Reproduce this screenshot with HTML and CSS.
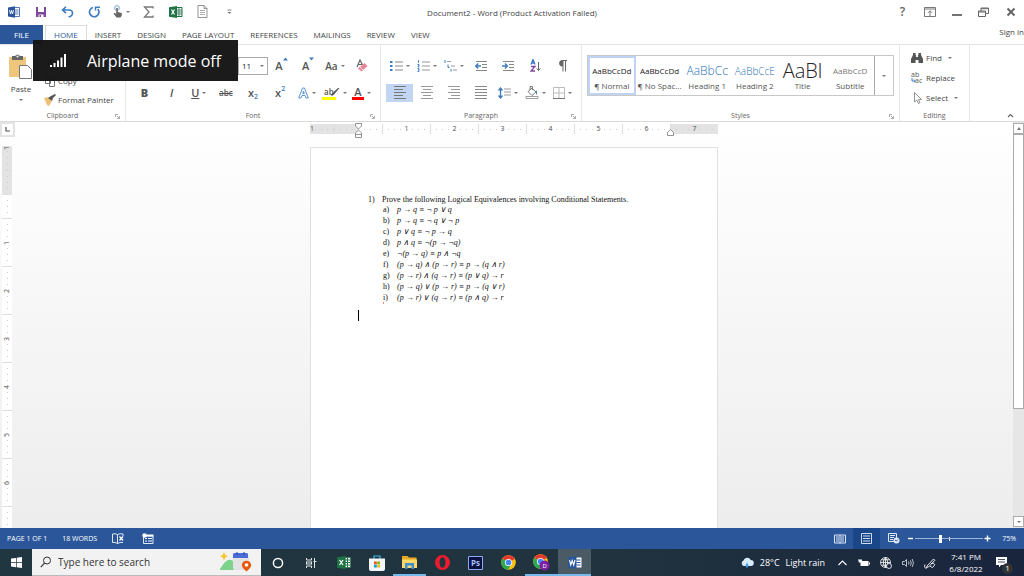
FILE: index.html
```html
<!DOCTYPE html>
<html lang="en">
<head>
    <meta charset="UTF-8">
    <meta name="viewport" content="width=device-width, initial-scale=1.0">
    <title>Document2 - Word</title>
    <link rel="stylesheet" href="styles.css">
</head>
<body>
    <!-- Title bar -->
    <header class="titlebar">
        <div class="quick">
            <button aria-label="Word"><svg width="12" height="12" viewBox="0 0 12 12"><path d="M6 1.500h5.500v9H6z" fill="#fff" stroke="#2b579a" stroke-width=".8"/><path d="M7 4h3.500M7 6h3.500M7 8h3.500" stroke="#2b579a" stroke-width=".8"/><path d="M0 1.500 7 .3v11.400L0 10.500z" fill="#2b579a"/><path d="M1.500 4l1 4L3.500 4.500 4.500 8l1-4" fill="none" stroke="#fff" stroke-width=".9"/></svg></button>
            <button aria-label="Save"><svg width="12" height="12" viewBox="0 0 12 12"><path d="M1 1h10v10H1z" fill="#80489c"/><path d="M3 1h6v5H3zM3.500 8.500h5V11h-5z" fill="#fff"/><path d="M4.500 9h1.500v2H4.500z" fill="#80489c"/></svg></button>
            <button aria-label="Undo"><svg width="13" height="12" viewBox="0 0 13 12"><path d="M5 .8 1.500 4 5 7.200M1.800 4H8c5 0 4.500 6.500-.5 6.800" fill="none" stroke="#3e7cc0" stroke-width="1.600"/></svg></button>
            <button aria-label="Repeat"><svg width="13" height="12" viewBox="0 0 13 12"><path d="M5 1.500A4.700 4.700 0 1 0 9.800 3" fill="none" stroke="#3e7cc0" stroke-width="1.700"/><path d="M7.500 4.500V1.200H12" fill="none" stroke="#3e7cc0" stroke-width="1.500"/></svg></button>
            <button aria-label="Touch mode"><svg width="10" height="13" viewBox="0 0 10 13"><circle cx="4" cy="3" r="2.400" fill="none" stroke="#7ba7d6"/><path d="M3.200 3h1.600v4l4 1v2.500L7.500 12.500h-4L.5 8.500l1-.7 1.700 1.200z" fill="#666"/></svg><i class="caret"></i></button>
            <button aria-label="Sum"><svg width="11" height="12" viewBox="0 0 11 12"><path d="M10 2.500V1H1.500L6 6l-4.500 5H10V9.500" fill="none" stroke="#777" stroke-width="1.300"/></svg></button>
            <button aria-label="Excel"><svg width="14" height="12" viewBox="0 0 14 12"><path d="M7 1.500h6v9H7z" fill="#fff" stroke="#217346"/><path d="M7 4h6M7 6h6M7 8h6M10 1.500v9" stroke="#217346" stroke-width=".8"/><path d="M0 1.200 8 0v12L0 10.800z" fill="#217346"/><path d="M2.500 3.500l3 5M5.500 3.500l-3 5" stroke="#fff" stroke-width="1.200"/></svg></button>
            <button aria-label="New document"><svg width="11" height="13" viewBox="0 0 11 13"><path d="M1 .5h6L10 3.500v9H1zM7 .5v3h3" fill="#fff" stroke="#888" stroke-width=".9"/><path d="M3 5.500h5M3 7.500h5M3 9.500h5" stroke="#999" stroke-width=".8"/></svg></button>
            <button aria-label="Customize"><svg width="5" height="6" viewBox="0 0 5 6"><path d="M.5 1h4" stroke="#777" stroke-width=".9"/><path d="M.5 3h4L2.500 5z" fill="#777"/></svg></button>
        </div>
        <h1 class="doc-title">Document2 - Word (Product Activation Failed)</h1>
        <div class="window-buttons">
            <button class="help" aria-label="Help">?</button>
            <button aria-label="Ribbon display"><svg width="12" height="10" viewBox="0 0 12 10"><path d="M.5.500h11v9H.5zM.5 2h11M6 9V4M4 5.800 6 3.800l2 2" fill="none" stroke="#777"/></svg></button>
            <button aria-label="Minimize"><svg width="10" height="10" viewBox="0 0 10 10"><path d="M0 8h10" stroke="#666" stroke-width="1.800"/></svg></button>
            <button aria-label="Restore"><svg width="11" height="10" viewBox="0 0 11 10"><path d="M.5 4h7v5.500h-7zM3 4V1h7.500v5.500h-3M.5 5h7M3 1.700h7.500" fill="none" stroke="#666"/></svg></button>
            <button aria-label="Close"><svg width="10" height="10" viewBox="0 0 10 10"><path d="M1.500 1.500l7 7M8.500 1.500l-7 7" stroke="#666" stroke-width="2"/></svg></button>
        </div>
    </header>

    <!-- Tabs -->
    <nav class="tabs">
        <button class="tab file">FILE</button>
        <button class="tab active">HOME</button>
        <button class="tab">INSERT</button>
        <button class="tab">DESIGN</button>
        <button class="tab">PAGE LAYOUT</button>
        <button class="tab">REFERENCES</button>
        <button class="tab">MAILINGS</button>
        <button class="tab">REVIEW</button>
        <button class="tab">VIEW</button>
        <a class="sign-in" href="#">Sign in</a>
    </nav>

    <!-- Ribbon -->
    <section class="ribbon">
        <div class="group clipboard">
            <div class="group-body">
                <button class="paste">
                    <svg width="26" height="25" viewBox="0 0 26 25"><path d="M1 3h17v20H1z" fill="#eec77d"/><path d="M4 2h3q2.500-3 5 0h3v4H4z" fill="#666"/><circle cx="9.500" cy="2.500" r="1" fill="#fff"/><path d="M11.500 11.500h8l4 4v9h-12z" fill="#fff" stroke="#777"/></svg>
                    <span>Paste</span>
                    <i class="caret"></i>
                </button>
                <div class="stack">
                    <button><svg width="12" height="12" viewBox="0 0 12 12"><path d="M2 1l7 8M10 1 3 9" stroke="#666"/></svg>Cut</button>
                    <button><svg width="12" height="12" viewBox="0 0 12 12"><path d="M1.500 1.500h5v7h-5zM5.500 4.500h5v7h-5z" fill="#fff" stroke="#777"/></svg>Copy</button>
                    <button><svg width="12" height="12" viewBox="0 0 12 12"><path d="M0 4l4-1 4 4-3 5-2-1z" fill="#eec077"/><path d="M4 4l3-2 4-2 1 1-3 3-1 3z" fill="#555"/></svg>Format Painter</button>
                </div>
            </div>
            <div class="group-label">Clipboard<svg class="launcher" width="5" height="5" viewBox="0 0 5 5"><path d="M.5 3V.5H3M2 2l2 2M4.500 2v2.500H2" fill="none" stroke="#888" stroke-width=".7"/></svg></div>
        </div>

        <div class="group font">
            <div class="group-body">
                <div class="tool-row">
                    <select class="font-name" aria-label="Font"><option>Calibri (Body)</option></select>
                    <div class="size-box"><select class="font-size" aria-label="Font size"><option>11</option></select><i class="caret"></i></div>
                    <button class="tool glyph" aria-label="Grow font">A<svg class="mark" width="5" height="4" viewBox="0 0 5 4"><path d="M0 3.500h5L2.500.5z" fill="#3e7cc0"/></svg></button>
                    <button class="tool glyph" aria-label="Shrink font">A<svg class="mark" width="5" height="4" viewBox="0 0 5 4"><path d="M0 .5h5L2.500 3.500z" fill="#3e7cc0"/></svg></button>
                    <button class="tool glyph case" aria-label="Change case">Aa<i class="caret"></i></button>
                    <button class="tool" aria-label="Clear formatting"><svg width="12" height="13" viewBox="0 0 12 13"><path d="M1 8 4 1l2.500 5M2 5.500h4" fill="none" stroke="#666" stroke-width="1.200"/><path d="M2 9.500 8.500 4 11.500 7 5.500 12.500z" fill="#e9849a"/><path d="M4 8l3 3" stroke="#fff" stroke-width=".7"/></svg></button>
                </div>
                <div class="tool-row">
                    <button class="tool glyph"><b>B</b></button>
                    <button class="tool glyph"><em>I</em></button>
                    <button class="tool glyph"><u>U</u><i class="caret"></i></button>
                    <button class="tool glyph small"><s>abc</s></button>
                    <button class="tool glyph" aria-label="Subscript">x<sub>2</sub></button>
                    <button class="tool glyph" aria-label="Superscript">x<sup>2</sup></button>
                    <button class="tool" aria-label="Text effects"><svg width="11" height="12" viewBox="0 0 11 12"><path d="M.7 11 4.500 1h2l3.800 10H8L7 8.500H4L3 11zM4.700 6.500h1.600L5.500 4z" fill="#fff" stroke="#5b94cf" stroke-width="1"/></svg><i class="caret"></i></button>
                    <button class="tool glyph small"><span class="swatch yellow">ab</span><svg class="pen" width="9" height="9" viewBox="0 0 9 9"><path d="M8.500 0 3 6.500 0 8.500 1.500 5 7 0z" fill="#555"/></svg><i class="caret"></i></button>
                    <button class="tool glyph"><span class="swatch red">A</span><i class="caret"></i></button>
                </div>
            </div>
            <div class="group-label">Font<svg class="launcher" width="5" height="5" viewBox="0 0 5 5"><path d="M.5 3V.5H3M2 2l2 2M4.500 2v2.500H2" fill="none" stroke="#888" stroke-width=".7"/></svg></div>
        </div>

        <div class="group paragraph">
            <div class="group-body">
                <div class="tool-row">
                    <button class="tool" aria-label="Bullets"><svg width="13" height="12" viewBox="0 0 13 12"><path d="M0 1h2.500v2H0zM0 5h2.500v2H0zM0 9h2.500v2H0z" fill="#3e7cc0"/><path d="M5 2h8M5 6h8M5 10h8" stroke="#888"/></svg><i class="caret"></i></button>
                    <button class="tool" aria-label="Numbering"><svg width="13" height="12" viewBox="0 0 13 12"><path d="M1.500 0v3M.5 4.500h1.500v1.500h-1V7H2.500M.5 8.500H2v3H.5M1 10h1" fill="none" stroke="#3e7cc0" stroke-width=".9"/><path d="M5 2h8M5 6h8M5 10h8" stroke="#999"/></svg><i class="caret"></i></button>
                    <button class="tool" aria-label="Multilevel list"><svg width="13" height="12" viewBox="0 0 13 12"><path d="M1 0v3M4 4.500v3H5.500M7 9v2.500" fill="none" stroke="#3e7cc0"/><path d="M3 1.500h4M7 6h4M9 10h4" stroke="#999"/></svg><i class="caret"></i></button>
                    <button class="tool" aria-label="Decrease indent"><svg width="12" height="12" viewBox="0 0 12 12"><path d="M1 1.500h11M7 4.500h5M7 7.500h5M1 10.500h11" stroke="#888"/><path d="M6 6H1M3.200 3.500.8 6l2.400 2.500" fill="none" stroke="#3e7cc0" stroke-width="1.400"/></svg></button>
                    <button class="tool" aria-label="Increase indent"><svg width="12" height="12" viewBox="0 0 12 12"><path d="M1 1.500h11M7 4.500h5M7 7.500h5M1 10.500h11" stroke="#888"/><path d="M0 6h5M3 3.500 5.400 6 3 8.500" fill="none" stroke="#3e7cc0" stroke-width="1.400"/></svg></button>
                    <button class="tool" aria-label="Sort"><svg width="11" height="13" viewBox="0 0 11 13"><path d="M1 5.500 3 .5l2 5M1.700 4h2.600" fill="none" stroke="#3e7cc0" stroke-width="1.300"/><path d="M1 7.500h4L1 12h4" fill="none" stroke="#80489c" stroke-width="1.300"/><path d="M8.500 3v8.500M6.700 9.500l1.800 2 1.800-2" fill="none" stroke="#666"/></svg></button>
                    <button class="tool" aria-label="Show marks"><svg width="9" height="12" viewBox="0 0 9 12"><path d="M4.500 0H9v1H8v10.500H7V1H5.500v10.500h-1V6.500C0 6.500 0 0 4.500 0z" fill="#666"/></svg></button>
                </div>
                <div class="tool-row">
                    <button class="tool selected" aria-label="Align left"><svg width="12" height="13" viewBox="0 0 12 13"><path d="M0 .5h12M0 3.500h9M0 6.500h12M0 9.500h9M0 12.500h12" stroke="#777"/></svg></button>
                    <button class="tool" aria-label="Center"><svg width="12" height="13" viewBox="0 0 12 13"><path d="M0 .5h12M2 3.500h8M0 6.500h12M2 9.500h8M0 12.500h12" stroke="#999"/></svg></button>
                    <button class="tool" aria-label="Align right"><svg width="12" height="13" viewBox="0 0 12 13"><path d="M0 .5h12M3 3.500h9M0 6.500h12M3 9.500h9M0 12.500h12" stroke="#999"/></svg></button>
                    <button class="tool" aria-label="Justify"><svg width="12" height="13" viewBox="0 0 12 13"><path d="M0 .5h12M0 3.500h12M0 6.500h12M0 9.500h12M0 12.500h12" stroke="#888"/></svg></button>
                    <button class="tool" aria-label="Line spacing"><svg width="13" height="12" viewBox="0 0 13 12"><path d="M2.500 1v10M.5 3.500l2-2.500 2 2.500M.5 8.500l2 2.500 2-2.500" fill="none" stroke="#3e7cc0" stroke-width="1.300"/><path d="M6 2h7M6 5h7M6 8h7" stroke="#999"/></svg><i class="caret"></i></button>
                    <button class="tool" aria-label="Shading"><svg width="14" height="13" viewBox="0 0 14 13"><path d="M3 5.500 7 2l4 4-4 3.500zM5 4V.5h2.500V4" fill="#fff" stroke="#777"/><path d="M11 4q2 2 1 5-1.500-1-1-5z" fill="#3e7cc0"/><path d="M1 10.500h12v2H1z" fill="#fff" stroke="#888" stroke-width=".8"/></svg><i class="caret"></i></button>
                    <button class="tool" aria-label="Borders"><svg width="12" height="12" viewBox="0 0 12 12"><path d="M.5.500h11v11H.5zM6 0v12M0 6h12" fill="none" stroke="#bbb"/><path d="M0 11.500h12" stroke="#777"/></svg><i class="caret"></i></button>
                </div>
            </div>
            <div class="group-label">Paragraph<svg class="launcher" width="5" height="5" viewBox="0 0 5 5"><path d="M.5 3V.5H3M2 2l2 2M4.500 2v2.500H2" fill="none" stroke="#888" stroke-width=".7"/></svg></div>
        </div>

        <div class="group styles">
            <div class="group-body">
                <div class="gallery">
                    <button class="style current"><span class="sample">AaBbCcDd</span><span>¶ Normal</span></button>
                    <button class="style"><span class="sample">AaBbCcDd</span><span>¶ No Spac...</span></button>
                    <button class="style"><span class="sample heading1">AaBbCc</span><span>Heading 1</span></button>
                    <button class="style"><span class="sample heading2">AaBbCcE</span><span>Heading 2</span></button>
                    <button class="style"><span class="sample title">AaBl</span><span>Title</span></button>
                    <button class="style"><span class="sample subtitle">AaBbCcD</span><span>Subtitle</span></button>
                    <button class="more" aria-label="More styles"><i class="caret"></i></button>
                </div>
            </div>
            <div class="group-label">Styles<svg class="launcher" width="5" height="5" viewBox="0 0 5 5"><path d="M.5 3V.5H3M2 2l2 2M4.500 2v2.500H2" fill="none" stroke="#888" stroke-width=".7"/></svg></div>
        </div>

        <div class="group editing">
            <div class="group-body">
                <div class="stack">
                    <button><svg width="12" height="12" viewBox="0 0 12 12"><path d="M2 1h2.500v2H5v2h2V3h.5V1H10v2l2 4v4H7.500V8h-3v3H0V7l2-4z" fill="#555"/></svg>Find<i class="caret"></i></button>
                    <button><svg class="swap" width="12" height="12" viewBox="0 0 12 12"><text x="0" y="5">ab</text><text x="4" y="11">ac</text><path d="M1 6v3h3M3 7.500 4.500 9 3 10.500" fill="none" stroke="#3e7cc0"/></svg>Replace</button>
                    <button><svg width="12" height="12" viewBox="0 0 12 12"><path d="M3.500.5v9.500l2.300-2 1.700 3.500 1.500-.8L7.500 7.500h3z" fill="#fff" stroke="#888" stroke-width=".9"/></svg>Select<i class="caret"></i></button>
                </div>
            </div>
            <div class="group-label">Editing</div>
        </div>
        <button class="collapse" aria-label="Collapse ribbon"><svg width="7" height="5" viewBox="0 0 7 5"><path d="M1 4l2.500-2.500L6 4" fill="none" stroke="#666" stroke-width="1.200"/></svg></button>
    </section>

    <!-- Document area -->
    <main class="workspace">
        <div class="side">
            <button class="tab-stop" aria-label="Tab stop"><svg width="5" height="5" viewBox="0 0 5 5"><path d="M1 0v4h4" fill="none" stroke="#555" stroke-width="1.200"/></svg></button>
            <div class="ruler vertical">
                <span><i>1</i></span><span></span><span><i>1</i></span><span><i>2</i></span><span><i>3</i></span><span><i>4</i></span><span><i>5</i></span><span><i>6</i></span><span></span>
            </div>
        </div>
        <div class="canvas">
            <div class="ruler-wrap">
                <div class="ruler horizontal">
                    <span><i>1</i></span><span></span><span><i>1</i></span><span><i>2</i></span><span><i>3</i></span><span><i>4</i></span><span><i>5</i></span><span><i>6</i></span><span><i>7</i></span>
                </div>
                <svg class="indent left" width="7" height="15" viewBox="0 0 7 15"><path d="M.5.500h6V3l-3 3-3-3zM3.500 7l3 3v4.500h-6V10zM.5 11.500h6" fill="#fff" stroke="#888" stroke-width=".9"/></svg>
                <svg class="indent right" width="7" height="7" viewBox="0 0 7 7"><path d="M3.500.5l3 3v3h-6v-3z" fill="#fff" stroke="#888" stroke-width=".9"/></svg>
            </div>
            <article class="page">
                <p class="question"><span class="num">1)</span>Prove the following Logical Equivalences involving Conditional Statements.</p>
                <ol class="parts">
                    <li><span class="num">a)</span><em>p → q ≡ ¬ p ∨ q</em></li>
                    <li><span class="num">b)</span><em>p → q ≡ ¬ q ∨ ¬ p</em></li>
                    <li><span class="num">c)</span><em>p ∨ q ≡ ¬ p → q</em></li>
                    <li><span class="num">d)</span><em>p ∧ q ≡ ¬(p → ¬q)</em></li>
                    <li><span class="num">e)</span><em>¬(p → q) ≡ p ∧ ¬q</em></li>
                    <li><span class="num">f)</span><em>(p → q) ∧ (p → r) ≡ p → (q ∧ r)</em></li>
                    <li><span class="num">g)</span><em>(p → r) ∧ (q → r) ≡ (p ∨ q) → r</em></li>
                    <li><span class="num">h)</span><em>(p → q) ∨ (p → r) ≡ p → (q ∨ r)</em></li>
                    <li><span class="num"><span class="misspelt">i)</span></span><em>(p → r) ∨ (q → r) ≡ (p ∧ q) → r</em></li>
                </ol>
                <div class="cursor"></div>
            </article>
        </div>
        <div class="scrollbar">
            <button aria-label="Scroll up"><i class="caret up"></i></button>
            <div class="track"><div class="thumb"></div></div>
            <button aria-label="Scroll down"><i class="caret"></i></button>
        </div>
    </main>

    <!-- Status bar -->
    <footer class="statusbar">
        <span class="pages">PAGE 1 OF 1</span>
        <span class="words">18 WORDS</span>
        <button class="proof" aria-label="Proofing"><svg width="12" height="11" viewBox="0 0 12 11"><path d="M5.500 1.500v9M5.500 1.500Q3 .2.500 1v8.500q2.500-.6 5 1M5.500 1.500Q8 .2 11 1v2M5.500 10.500q2.500-1.500 5.500-1" fill="none" stroke="#dfe8f5"/><path d="M7.500 3.500l3.500 4M11 3.500l-3.500 4" stroke="#fff" stroke-width="1.300"/></svg></button>
        <button aria-label="Macros"><svg width="12" height="11" viewBox="0 0 12 11"><path d="M1.500 3v7.500h9.500V3z" fill="none" stroke="#dfe8f5"/><path d="M4 2.500h7.500" stroke="#fff" stroke-width="2"/><circle cx="2.500" cy="2.500" r="2.200" fill="#fff"/><path d="M3 5.500h2M6 5.500h4M3 8h2M6 8h4" stroke="#fff"/></svg></button>
        <div class="views">
            <button aria-label="Read mode"><svg width="12" height="10" viewBox="0 0 12 10"><path d="M6 1v8.500M.5 1h11v8H.5zM2 3h3M2 5h3M2 7h3M7 3h3M7 5h3M7 7h3" fill="none" stroke="#dfe8f5"/></svg></button>
            <button class="on" aria-label="Print layout"><svg width="11" height="11" viewBox="0 0 11 11"><path d="M.5.500h10v10H.5zM2 3h7M2 5.500h7M2 8h7" fill="none" stroke="#cfdcf0"/></svg></button>
            <button aria-label="Web layout"><svg width="12" height="11" viewBox="0 0 12 11"><path d="M.5.500h8v8h-8zM2 2.500h5M2 4.500h4M2 6.500h3" fill="none" stroke="#dfe8f5"/><circle cx="8.500" cy="7.500" r="3" fill="#dfe8f5"/><path d="M7 7l1.500 1L10 6.500" stroke="#2b579a" fill="none"/></svg></button>
        </div>
        <div class="zoom">
            <button aria-label="Zoom out"><svg width="7" height="7" viewBox="0 0 7 7"><path d="M1 3.500h5" stroke="#fff" stroke-width="1.400"/></svg></button>
            <input class="zoom-range" type="range" min="0" max="100" value="37" aria-label="Zoom">
            <button aria-label="Zoom in"><svg width="7" height="7" viewBox="0 0 7 7"><path d="M.5 3.500h6M3.500.5v6" stroke="#fff" stroke-width="1.400"/></svg></button>
            <span class="percent">75%</span>
        </div>
    </footer>

    <!-- Taskbar -->
    <footer class="taskbar">
        <button class="start" aria-label="Start"><svg width="11" height="11" viewBox="0 0 11 11"><path d="M0 1.600 5 .9v4.300H0zM5.700.8 11 0v5.200H5.700zM0 5.900h5v4.300l-5-.7zM5.700 5.900H11V11l-5.300-.8z" fill="#fff"/></svg></button>
        <label class="search">
            <svg width="12" height="12" viewBox="0 0 12 12"><circle cx="7" cy="4.500" r="3.500" fill="none" stroke="#333"/><path d="M4.500 7.200.8 11.200" stroke="#333" stroke-width="1.200"/></svg>
            <input type="text" placeholder="Type here to search" aria-label="Search">
            <svg width="34" height="20" viewBox="0 0 34 20"><path d="M5 0l1.200 3L9 4.200 6.200 5.400 5 8.400 3.800 5.400 1 4.200 3.800 3z" fill="#f7c325"/><path d="M1 17Q9 3 15 10v8H1z" fill="#7fd28c"/><path d="M14 4h16v14H16q-2 0-2-3z" fill="#e3e3e6"/><path d="M15 1h13q1 0 1 2v3H14V3q0-2 1-2z" fill="#4b6bd6"/><path d="M18 0v3M25 0v3" stroke="#2c459f"/><path d="M27.500 19.500Q22 15 23 12a4.700 4.700 0 0 1 9 0q1 3-4.500 7.500z" fill="#e8590c"/><circle cx="27.500" cy="13" r="1.800" fill="#fff"/></svg>
        </label>
        <div class="apps">
            <button aria-label="Cortana"><svg width="12" height="12" viewBox="0 0 12 12"><circle cx="6" cy="6" r="4.600" fill="none" stroke="#fff" stroke-width="1.500"/></svg></button>
            <button aria-label="Task view"><svg width="12" height="12" viewBox="0 0 12 12"><path d="M1.500 1v2h5V1M1.500 11V9h5v2M1.500 4.500v3M6.500 4.500v3M1.500 5h5M1.500 7h5M9.500 1v10M8.500 4.500h3" fill="none" stroke="#dde3e6"/></svg></button>
            <button aria-label="Excel"><svg width="14" height="13" viewBox="0 0 14 13"><path d="M8 1.500h5.500v10H8z" fill="#fff" stroke="#217346" stroke-width=".7"/><path d="M8 4h5M8 6.500h5M8 9h5M10.500 2v9" stroke="#217346"/><path d="M0 1.300 8.500 0v13L0 11.700z" fill="#1f7244"/><path d="M2.500 4l3.500 5M6 4 2.500 9" stroke="#fff" stroke-width="1.300"/></svg></button>
            <button aria-label="Store"><svg width="16" height="16" viewBox="0 0 16 16"><path d="M5 4V1h6v3" fill="none" stroke="#42b7e8" stroke-width="1.200"/><path d="M0 3.500h16V14q0 2-2 2H2q-2 0-2-2z" fill="#f4f6f8"/><path d="M5 6.500h2.800v2.800H5z" fill="#f25022"/><path d="M8.200 6.500H11v2.800H8.200z" fill="#7fba00"/><path d="M5 9.700h2.800v2.800H5z" fill="#00a4ef"/><path d="M8.200 9.700H11v2.800H8.200z" fill="#ffb900"/></svg></button>
            <button class="open" aria-label="File Explorer"><svg width="15" height="13" viewBox="0 0 15 13"><path d="M0 0h5.500L7 1.500h7.500V12H0z" fill="#e9a825"/><path d="M0 3.500h15V12H0z" fill="#ffd867"/><path d="M3 7h9v6H9.500V9.500h-4V13H3z" fill="#3f8fd6"/></svg></button>
            <button aria-label="Opera"><svg width="15" height="15" viewBox="0 0 15 15"><path fill-rule="evenodd" d="M7.500 0a7.500 7.500 0 1 1 0 15 7.500 7.500 0 0 1 0-15zm0 2.300c-4 0-4 10.400 0 10.400s4-10.400 0-10.400z" fill="#ee1c2e"/></svg></button>
            <button aria-label="Photoshop"><svg class="ps" width="15" height="14" viewBox="0 0 15 14"><path d="M.5.500h14v13H.5z" fill="#0b1040" stroke="#8caaf0"/><text x="3" y="10">Ps</text></svg></button>
            <button aria-label="Chrome"><svg width="15" height="15" viewBox="0 0 15 15"><circle cx="7.500" cy="7.500" r="7.300" fill="#fbc116"/><path d="M7.500 7.500 1.200 3.800A7.300 7.300 0 0 1 13.900 4z" fill="#e33b2e"/><path d="M7.500 7.500 1.200 3.800A7.300 7.300 0 0 0 7 14.800l3-5z" fill="#2da94f"/><circle cx="7.500" cy="7.500" r="3.600" fill="#fff"/><circle cx="7.500" cy="7.500" r="2.800" fill="#4285f4"/></svg></button>
            <button class="open" aria-label="Chrome profile"><svg class="profile" width="17" height="17" viewBox="0 0 17 17"><circle cx="7.500" cy="7.500" r="7.300" fill="#fbc116"/><path d="M7.500 7.500 1.200 3.800A7.300 7.300 0 0 1 13.900 4z" fill="#e33b2e"/><path d="M7.500 7.500 1.200 3.800A7.300 7.300 0 0 0 7 14.800l3-5z" fill="#2da94f"/><circle cx="7.500" cy="7.500" r="3.600" fill="#fff"/><circle cx="7.500" cy="7.500" r="2.800" fill="#4285f4"/><circle cx="11.500" cy="11.500" r="5" fill="#7b1fa2"/><text x="9.500" y="14">D</text></svg></button>
            <button class="open current" aria-label="Word"><svg width="14" height="13" viewBox="0 0 14 13"><path d="M8 1.500h5.500v10H8z" fill="#fff"/><path d="M8.500 4h4M8.500 6.500h4M8.500 9h4" stroke="#2b579a"/><path d="M0 1.300 8.500 0v13L0 11.700z" fill="#2b579a"/><path d="M1.500 4l1.300 5 1.400-4.500L5.700 9 7 4" fill="none" stroke="#fff" stroke-width="1.100"/></svg></button>
        </div>
        <div class="tray">
            <button class="weather"><svg width="14" height="12" viewBox="0 0 14 12"><path d="M3.500 9a3 3 0 0 1 0-5.500 4 4 0 0 1 7.300-.5 3 3 0 0 1 0 6z" fill="#d6ebfb"/><path d="M7 5.500Q9.500 9 7 11 4.500 9 7 5.500z" fill="#3c9be8"/></svg><span>28°C</span><span>Light rain</span></button>
            <button aria-label="Hidden icons"><svg width="9" height="6" viewBox="0 0 9 6"><path d="M.5 5l4-4 4 4" fill="none" stroke="#fff" stroke-width="1.100"/></svg></button>
            <button aria-label="Battery"><svg width="12" height="8" viewBox="0 0 12 8"><path d="M2.500 2h8v5h-8z" fill="#fff"/><path d="M11 3.500h1v2h-1zM0 .5h4v3H1z" fill="#fff"/></svg></button>
            <button aria-label="Network"><svg width="12" height="12" viewBox="0 0 12 12"><path d="M5.500.5a5 5 0 1 0 0 10 5 5 0 0 0 0-10zM.5 5.500h10M5.500.5v10M1.500 2.800h8M1.500 8.200h8M5.500.5q-4.500 5 0 10M5.500.5q4.500 5 0 10" fill="none" stroke="#fff" stroke-width=".8"/><circle cx="9" cy="9" r="2.500" fill="#1a2740" stroke="#fff" stroke-width=".8"/></svg></button>
            <button aria-label="Volume"><svg width="12" height="10" viewBox="0 0 12 10"><path d="M.5 3.500h2L4.500 1.500v7l-2-2h-2zM6.500 3.500q1 1.500 0 3M8.300 2.300q2 2.700 0 5.400M10.200 1q2.500 4 0 8" fill="none" stroke="#dfe5ec" stroke-width=".8"/></svg></button>
            <button aria-label="Pen"><svg width="12" height="12" viewBox="0 0 12 12"><path d="M3 9 9.500 2l1.300 1.300L4.500 10 2.500 10.500zM1 7.500q-1.500 4 2 3.500M6 9q3 3 4-.5M7 6.500q4-1 3.500 2" fill="none" stroke="#fff" stroke-width=".9"/></svg></button>
            <time class="clock"><span>7:41 PM</span><span>6/8/2022</span></time>
            <button class="notices" aria-label="Notifications"><svg width="12" height="12" viewBox="0 0 12 12"><path d="M0 0h11v8H5L3 10.500V8H0z" fill="#fff"/><path d="M2 2.500h7M2 5h7" stroke="#1a2740" stroke-width=".8"/></svg><span class="badge">1</span></button>
        </div>
    </footer>

    <div class="toast">
        <svg width="17" height="15" viewBox="0 0 17 15"><path d="M0 12h2v2H0zM3.500 10h2v4h-2zM7 7.500h2V14H7zM10.500 4.500h2V14h-2zM14 1h2v13h-2z" fill="#fff"/></svg>
        <span>Airplane mode off</span>
    </div>
</body>
</html>
```
FILE: styles.css
```css
* {
    box-sizing: border-box;
}
body {
    margin: 0;
    height: 100vh;
    display: flex;
    flex-direction: column;
    overflow: hidden;
    position: relative;
    background: #fff;
    color: #444;
    font-family: "Open Sans", sans-serif;
    font-size: 8px;
    line-height: 10px;
}
button, input, select {
    font: inherit;
    color: inherit;
    margin: 0;
    padding: 0;
    border: none;
    background: none;
}
button {
    display: flex;
    align-items: center;
    justify-content: center;
}
svg {
    display: block;
    flex: none;
}
.caret {
    flex: none;
    margin-left: 3px;
    border: 2px solid transparent;
    border-top-color: #777;
    border-bottom: none;
}
.caret.up {
    border-top: none;
    border-bottom: 3px solid #777;
}

/* title bar */
.titlebar {
    height: 25px;
    flex: none;
    display: grid;
    grid-template-columns: 1fr auto 1fr;
    align-items: center;
}
.quick, .window-buttons {
    display: flex;
    align-self: start;
}
.quick button, .window-buttons button {
    width: 27px;
    height: 23px;
}
.window-buttons {
    justify-content: flex-end;
}
.window-buttons .help {
    font-size: 12px;
    font-weight: 600;
    color: #666;
}
.doc-title {
    margin: 0;
    font-size: 8px;
    font-weight: normal;
}

/* tabs */
.tabs {
    height: 20px;
    flex: none;
    display: flex;
    border-bottom: 1px solid #e4e4e4;
}
.tab {
    padding: 0 8px;
}
.tab.file {
    width: 43px;
    margin-right: 2px;
    background: #2b579a;
    color: #fff;
}
.tab.active {
    height: 20px;
    border: 1px solid #dcdcdc;
    border-bottom-color: #fff;
    background: #fff;
    color: #2b579a;
}
.sign-in {
    margin-left: auto;
    padding-top: 2px;
    color: #444;
    text-decoration: none;
}

/* ribbon */
.ribbon {
    height: 77px;
    flex: none;
    display: flex;
    border-bottom: 1px solid #dadada;
}
.group {
    display: flex;
    flex-direction: column;
    padding: 7px 5px 0;
    border-right: 1px solid #e6e6e6;
}
.group-body {
    flex: 1;
}
.group-label {
    height: 10px;
    display: flex;
    align-items: center;
    justify-content: center;
    position: relative;
    font-size: 7px;
    color: #666;
}
.launcher {
    position: absolute;
    right: 0;
    bottom: 2px;
}
.clipboard { width: 126px; }
.font { width: 255px; }
.paragraph { width: 201px; }
.styles { flex: 1; }
.editing {
    width: 70px;
    padding-top: 3px;
}

.clipboard .group-body {
    display: flex;
    gap: 7px;
}
.paste {
    width: 32px;
    flex-direction: column;
    justify-content: flex-start;
    gap: 5px;
    padding-top: 2px;
}
.paste .caret {
    margin: 0;
}
.stack button {
    height: 20px;
    gap: 3px;
    white-space: nowrap;
}
.clipboard .stack button {
    height: 19px;
    gap: 2px;
}
.tool-row {
    height: 27px;
    display: flex;
    align-items: center;
}
.tool {
    flex: 1;
    height: 18px;
}
.glyph {
    font-size: 11px;
    font-weight: 600;
    color: #555;
}
.glyph.small {
    font-size: 8px;
}
.glyph.case {
    font-size: 10px;
}
.glyph .mark {
    align-self: flex-start;
}
.glyph sub, .glyph sup {
    font-size: 7px;
    color: #3e7cc0;
}
.glyph sub {
    align-self: flex-end;
}
.glyph sup {
    align-self: flex-start;
}
.selected {
    background: #c2d5f2;
}
.font-name, .size-box {
    height: 18px;
    border: 1px solid #ababab;
    appearance: none;
}
.font-name {
    width: 108px;
    padding-left: 3px;
}
.size-box {
    width: 30px;
    display: flex;
    align-items: center;
    margin-left: -1px;
    padding: 0 3px;
}
.font-size {
    appearance: none;
    width: 19px;
    color: #222;
}
.size-box .caret {
    margin: 0;
}
.swatch {
    display: block;
    height: 14px;
    padding: 0 2px;
    line-height: 11px;
    border-bottom: 3px solid;
}
.swatch.yellow { border-color: #ff0; }
.swatch.red { border-color: #f00; }
.pen {
    margin-left: -5px;
}

/* style gallery */
.gallery {
    height: 41px;
    margin-top: 3px;
    display: flex;
    border: 1px solid #c8c8c8;
}
.style {
    flex: 1;
    min-width: 0;
    flex-direction: column;
    justify-content: flex-end;
    padding-bottom: 2px;
    border: 2px solid transparent;
    white-space: nowrap;
    color: #555;
}
.style.current {
    border-color: #bfd3f2;
}
.sample {
    height: 20px;
    line-height: 20px;
    color: #222;
}
.sample.heading1 {
    font-size: 12px;
    font-weight: 300;
    color: #2e74b5;
}
.sample.heading2 {
    font-size: 10px;
    font-weight: 300;
    color: #2e74b5;
}
.sample.title {
    font-size: 20px;
    font-weight: 300;
}
.sample.subtitle {
    color: #777;
}
.more {
    width: 19px;
    border-left: 1px solid #ababab;
}
.more .caret {
    margin: 0;
}
.editing .group-body {
    padding-left: 6px;
}
.swap text {
    font-size: 7px;
    fill: #555;
}
.collapse {
    align-self: flex-end;
    width: 54px;
    height: 12px;
    padding-left: 26px;
}

/* document */
.workspace {
    flex: 1;
    min-height: 0;
    display: flex;
    background: linear-gradient(#fff, #ededed);
}
.side {
    width: 15px;
    display: flex;
    flex-direction: column;
    overflow: hidden;
}
.tab-stop {
    height: 15px;
    flex: none;
    border: 2px solid #e3e3e3;
    background: #fff;
}
.ruler {
    display: flex;
    font-size: 7px;
    color: #555;
}
.ruler span {
    flex: none;
    display: flex;
    align-items: center;
    justify-content: center;
}
.ruler i {
    font-style: normal;
}
.horizontal {
    height: 10px;
    background: linear-gradient(90deg, #e3e3e3 48px, #fff 48px, #fff 360px, #e3e3e3 360px);
}
.horizontal span {
    width: 48px;
    border-left: 1px solid #ddd;
    background: repeating-linear-gradient(90deg, transparent 0 5px, #ccc 5px 6px) 0 5px / 100% 1px no-repeat;
}
.horizontal span:first-child {
    width: 24px;
    justify-content: flex-start;
    border: none;
}
.vertical {
    flex: 1;
    min-height: 0;
    overflow: hidden;
    flex-direction: column;
    width: 10px;
    margin: 9px 0 0 2px;
    background: linear-gradient(#e3e3e3 49px, #fff 49px);
}
.vertical span {
    height: 48px;
    border-top: 1px solid #ddd;
    background: repeating-linear-gradient(transparent 0 5px, #ccc 5px 6px) 5px 0 / 1px 100% no-repeat;
}
.vertical span:first-child {
    height: 24px;
    align-items: flex-start;
    border: none;
}
.vertical i {
    transform: rotate(-90deg);
}
.vertical span:first-child i {
    line-height: 4px;
}
.canvas {
    flex: 1;
    display: flex;
    flex-direction: column;
    align-items: center;
}
.ruler-wrap {
    position: relative;
    width: 408px;
    margin: 2px 0 13px;
}
.indent {
    position: absolute;
    top: -1px;
}
.indent.left { left: 45px; }
.indent.right {
    left: 357px;
    top: 5px;
}
.page {
    flex: 1;
    width: 408px;
    padding: 47px 47px 0;
    background: #fff;
    border: 1px solid #e0e0e0;
    border-bottom: none;
    font-family: "Liberation Serif", serif;
    line-height: 11px;
    color: #111;
    white-space: nowrap;
}
.question {
    margin: 0;
    padding-left: 10px;
    line-height: 9px;
}
.num {
    display: inline-block;
    width: 14px;
}
.parts {
    list-style: none;
    margin: 0;
    padding-left: 25px;
}
.misspelt {
    text-decoration: underline wavy #e00 1px;
    text-underline-offset: 0;
}
.cursor {
    width: 1px;
    height: 11px;
    margin-top: 7px;
    background: #000;
}
.scrollbar {
    width: 11px;
    display: flex;
    flex-direction: column;
    padding: 1px 0;
    background: #e6e6e6;
}
.scrollbar button {
    height: 11px;
    border: 1px solid #ababab;
    background: #fff;
}
.scrollbar .caret {
    margin: 0;
}
.track {
    flex: 1;
}
.thumb {
    height: 72%;
    border: 1px solid #ababab;
    background: #fff;
}

/* status bar */
.statusbar {
    height: 21px;
    flex: none;
    display: flex;
    align-items: center;
    padding: 0 8px 0 7px;
    background: #2b579a;
    color: #fff;
    font-size: 7px;
}
.words {
    margin: 0 15px;
}
.proof {
    margin-right: 18px;
}
.views {
    margin-left: auto;
    display: flex;
    align-self: stretch;
}
.views button {
    width: 27px;
}
.views .on {
    background: #19478a;
}
.zoom {
    display: flex;
    align-items: center;
}
.zoom-range {
    appearance: none;
    width: 68px;
    height: 9px;
    margin: 0 1px;
    background: linear-gradient(#9db5d9, #9db5d9) center / 100% 1px no-repeat, linear-gradient(#fff, #fff) center / 1px 4px no-repeat;
}
.zoom-range::-webkit-slider-thumb {
    appearance: none;
    width: 3px;
    height: 8px;
    background: #fff;
}
.percent {
    margin-left: 11px;
}

/* taskbar */
.taskbar {
    height: 27px;
    flex: none;
    display: flex;
    background: linear-gradient(90deg, #203640, #20333f 60%, #19243d);
    color: #fff;
}
.start {
    width: 32px;
}
.search {
    width: 229px;
    display: flex;
    align-items: center;
    gap: 6px;
    padding: 0 8px;
    background: #f2f2f2;
    border-bottom: 1px solid #bbb;
}
.search input {
    flex: 1;
    min-width: 0;
    font-size: 10px;
    outline: none;
}
.search input::placeholder {
    color: #333;
    opacity: 1;
}
.apps {
    display: flex;
}
.apps button {
    width: 33px;
    padding-top: 2px;
    border-bottom: 2px solid transparent;
}
.apps .open {
    border-bottom-color: #76b9ed;
}
.apps .current {
    background: #4a5b66;
}
.ps text {
    font-size: 8px;
    font-weight: bold;
    fill: #a9c2ff;
}
.profile text {
    font-size: 6px;
    fill: #fff;
}
.tray {
    margin-left: auto;
    display: flex;
    align-items: center;
}
.tray button {
    width: 22px;
}
.tray .weather {
    width: auto;
    gap: 6px;
    margin-right: 6px;
    font-size: 9px;
}
.clock {
    width: 50px;
    display: flex;
    flex-direction: column;
    align-items: center;
    line-height: 12px;
}
.tray .notices {
    width: 33px;
    padding-right: 12px;
    position: relative;
}
.badge {
    position: absolute;
    right: 11px;
    bottom: -5px;
    width: 11px;
    height: 11px;
    border-radius: 50%;
    background: #333;
    text-align: center;
}

.toast {
    position: absolute;
    left: 33px;
    top: 40px;
    height: 41px;
    display: flex;
    align-items: center;
    gap: 20px;
    padding: 0 17px;
    background: rgba(20, 20, 20, 0.97);
    color: #fff;
    font-size: 16px;
    font-weight: 400;
}
```
